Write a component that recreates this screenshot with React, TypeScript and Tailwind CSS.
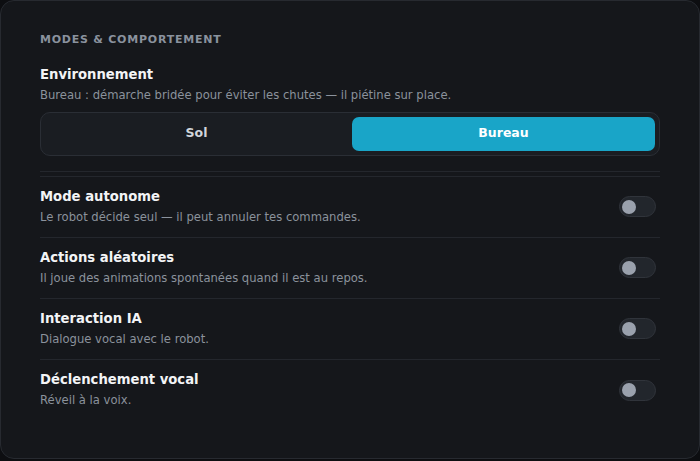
import React, { useState } from 'react';

type Setting = {
  id: string;
  label: string;
  hint: string;
};

const SETTINGS: Setting[] = [
  { id: 'autonomous', label: 'Mode autonome', hint: 'Le robot décide seul — il peut annuler tes commandes.' },
  { id: 'random', label: 'Actions aléatoires', hint: 'Il joue des animations spontanées quand il est au repos.' },
  { id: 'ai', label: 'Interaction IA', hint: 'Dialogue vocal avec le robot.' },
  { id: 'wake', label: 'Déclenchement vocal', hint: 'Réveil à la voix.' },
];

function Toggle({ on, onChange }: { on: boolean; onChange: () => void }) {
  return (
    <button
      type="button"
      onClick={onChange}
      className={`relative h-[21px] w-[37px] shrink-0 rounded-full border transition-colors ${
        on ? 'border-[#1ba3c6] bg-[#1ba3c6]' : 'border-[#30343b] bg-[#22262c]'
      }`}
    >
      <span
        className={`absolute top-[2.5px] h-[14px] w-[14px] rounded-full transition-all ${
          on ? 'left-[19px] bg-white' : 'left-[2px] bg-[#9aa1ad]'
        }`}
      />
    </button>
  );
}

export default function App() {
  const [env, setEnv] = useState<'sol' | 'bureau'>('bureau');
  const [flags, setFlags] = useState<Record<string, boolean>>({});

  return (
    <div className="h-[461px] w-[700px] bg-[#0d0e11] font-['DejaVu_Sans',sans-serif]">
      <div className="h-[459px] rounded-[14px] border border-[#272a30] bg-[#15171b] px-[39px] pt-[31px]">
        <h2 className="text-[11px] font-bold uppercase tracking-[0.07em] text-[#8a929e]">
          Modes &amp; comportement
        </h2>

        <div className="mt-[17px] border-b border-[#24272d] pb-[15px]">
          <div className="text-[13.2px] font-bold leading-[18px] text-[#f3f4f6]">Environnement</div>
          <div className="mt-[4px] text-[11.6px] leading-[15px] text-[#8b929c]">
            Bureau : démarche bridée pour éviter les chutes — il piétine sur place.
          </div>
          <div className="mt-[9px] flex gap-[4px] rounded-[10px] border border-[#2a2e35] bg-[#1a1d22] p-[4px]">
            <button
              type="button"
              onClick={() => setEnv('sol')}
              className={`h-[34px] flex-1 rounded-[7px] text-[12.5px] font-bold ${
                env === 'sol' ? 'bg-[#19a5c8] text-white' : 'text-[#d1d5db]'
              }`}
            >
              Sol
            </button>
            <button
              type="button"
              onClick={() => setEnv('bureau')}
              className={`h-[34px] flex-1 rounded-[7px] text-[12.5px] font-bold ${
                env === 'bureau' ? 'bg-[#19a5c8] text-white' : 'text-[#d1d5db]'
              }`}
            >
              Bureau
            </button>
          </div>
        </div>

        <div className="mt-[4px] border-t border-[#24272d]">
          {SETTINGS.map((s, i) => (
            <div
              key={s.id}
              className={`flex h-[61px] items-center justify-between pr-[4px] ${
                i < SETTINGS.length - 1 ? 'border-b border-[#24272d]' : ''
              }`}
            >
              <div className="-mt-[1px]">
                <div className="text-[13.2px] font-bold leading-[18px] text-[#f3f4f6]">{s.label}</div>
                <div className="mt-[4px] text-[11.6px] leading-[15px] text-[#8b929c]">{s.hint}</div>
              </div>
              <Toggle
                on={!!flags[s.id]}
                onChange={() => setFlags((f) => ({ ...f, [s.id]: !f[s.id] }))}
              />
            </div>
          ))}
        </div>
      </div>
    </div>
  );
}
